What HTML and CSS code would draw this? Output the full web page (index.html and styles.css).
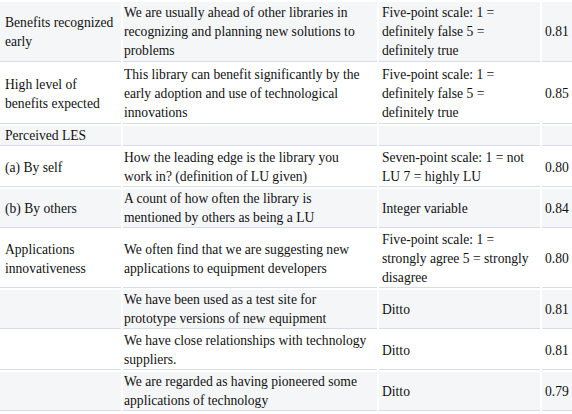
FILE: index.html
```html
<!DOCTYPE html>
<html lang="en">
<head>
<meta charset="utf-8">
<title>Measures</title>
<link rel="stylesheet" href="styles.css">
</head>
<body>
<div class="measures">
  <div class="row alt tall">
    <p class="cell c1">Benefits recognized<br>early</p>
    <p class="cell c2">We are usually ahead of other libraries in<br>recognizing and planning new solutions to<br>problems</p>
    <p class="cell c3">Five-point scale: 1 =<br>definitely false 5 =<br>definitely true</p>
    <p class="cell c4">0.81</p>
  </div>
  <div class="row tall">
    <p class="cell c1">High level of<br>benefits expected</p>
    <p class="cell c2">This library can benefit significantly by the<br>early adoption and use of technological<br>innovations</p>
    <p class="cell c3">Five-point scale: 1 =<br>definitely false 5 =<br>definitely true</p>
    <p class="cell c4">0.85</p>
  </div>
  <div class="row alt">
    <p class="cell c1">Perceived LES</p>
    <p class="cell c2"></p>
    <p class="cell c3"></p>
    <p class="cell c4"></p>
  </div>
  <div class="row">
    <p class="cell c1">(a) By self</p>
    <p class="cell c2">How the leading edge is the library you<br>work in? (definition of LU given)</p>
    <p class="cell c3">Seven-point scale: 1 = not<br>LU 7 = highly LU</p>
    <p class="cell c4">0.80</p>
  </div>
  <div class="row alt">
    <p class="cell c1">(b) By others</p>
    <p class="cell c2">A count of how often the library is<br>mentioned by others as being a LU</p>
    <p class="cell c3">Integer variable</p>
    <p class="cell c4">0.84</p>
  </div>
  <div class="row">
    <p class="cell c1">Applications<br>innovativeness</p>
    <p class="cell c2">We often find that we are suggesting new<br>applications to equipment developers</p>
    <p class="cell c3">Five-point scale: 1 =<br>strongly agree 5 = strongly<br>disagree</p>
    <p class="cell c4">0.80</p>
  </div>
  <div class="row alt">
    <p class="cell c1"></p>
    <p class="cell c2">We have been used as a test site for<br>prototype versions of new equipment</p>
    <p class="cell c3">Ditto</p>
    <p class="cell c4">0.81</p>
  </div>
  <div class="row">
    <p class="cell c1"></p>
    <p class="cell c2">We have close relationships with technology<br>suppliers.</p>
    <p class="cell c3">Ditto</p>
    <p class="cell c4">0.81</p>
  </div>
  <div class="row alt">
    <p class="cell c1"></p>
    <p class="cell c2">We are regarded as having pioneered some<br>applications of technology</p>
    <p class="cell c3">Ditto</p>
    <p class="cell c4">0.79</p>
  </div>
</div>
</body>
</html>
```

FILE: styles.css
```css
body {
  margin: 0;
  background: #ffffff;
}

.measures {
  display: flex;
  flex-direction: column;
  gap: 2px;
  padding-top: 2px;
  color: #111111;
}

.row {
  display: grid;
  grid-template-columns: 121px 254px 161px 30px;
  column-gap: 2px;
}

.cell {
  display: flex;
  flex-direction: column;
  justify-content: center;
  margin: 0;
  min-height: 19px;
  padding: 0 2px 0 2px;
  white-space: nowrap;
  background: #ffffff;
  border-bottom: 1px solid #d6dde6;
  font: 13.6px/19px "Liberation Serif", Tinos, "Times New Roman", serif;
}

.row.tall .cell {
  padding-top: 1px;
  padding-bottom: 1px;
}

.row.alt .cell {
  background: #f5f6f8;
}

.c1 {
  padding-left: 5px;
}

.c2 {
  padding-left: 1px;
  padding-right: 0;
}

.c3 {
  padding-left: 3px;
}

.c4 {
  padding-left: 3px;
  padding-right: 0;
}
```
